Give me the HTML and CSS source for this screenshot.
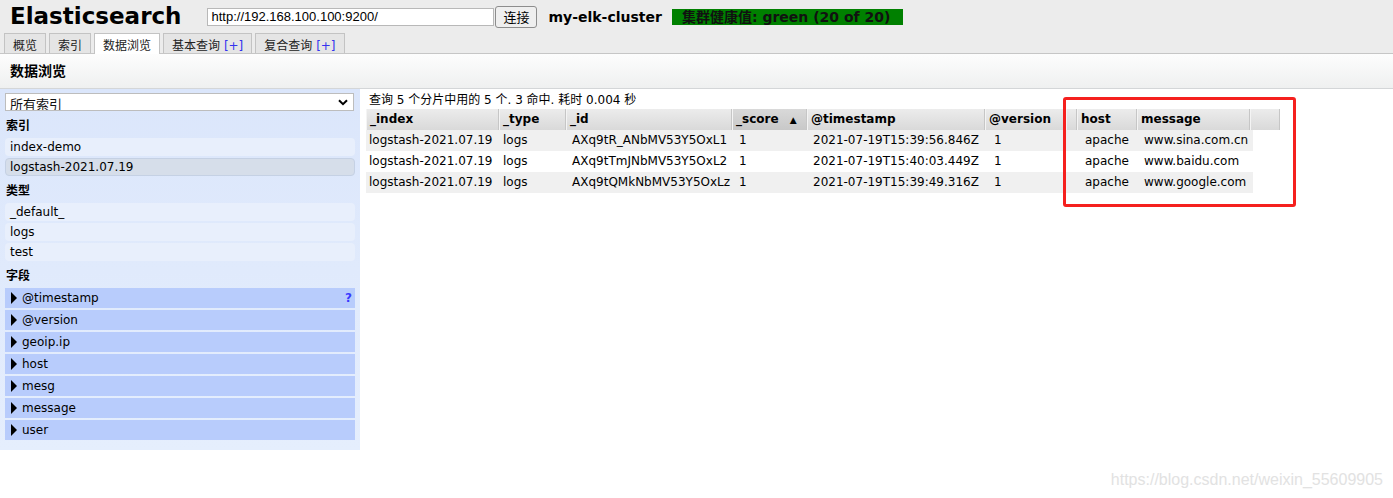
FILE: index.html
```html
<!DOCTYPE html>
<html lang="zh">
<head>
    <meta charset="UTF-8">
    <meta name="viewport" content="width=device-width, initial-scale=1.0">
    <link rel="stylesheet" href="styles.css">
    <title>Elasticsearch head - 数据浏览</title>
</head>
<body>
    <div class="header">
        <div class="top-bar">
            <h1 class="logo">Elasticsearch</h1>
            <input class="base-uri" type="text" value="http://192.168.100.100:9200/">
            <button class="connect">连接</button>
            <span class="cluster-name">my-elk-cluster</span>
            <span class="health">集群健康值: green (20 of 20)</span>
        </div>
        <div class="tabs">
            <div class="tab">概览</div>
            <div class="tab">索引</div>
            <div class="tab active">数据浏览</div>
            <div class="tab">基本查询 <span class="plus">[+]</span></div>
            <div class="tab">复合查询 <span class="plus">[+]</span></div>
        </div>
    </div>

    <div class="section-title">数据浏览</div>

    <div class="browser">
        <div class="sidebar">
            <select class="index-select">
                <option>所有索引</option>
            </select>
            <div class="group-label">索引</div>
            <div class="item">index-demo</div>
            <div class="item selected">logstash-2021.07.19</div>
            <div class="group-label">类型</div>
            <div class="item">_default_</div>
            <div class="item">logs</div>
            <div class="item">test</div>
            <div class="group-label">字段</div>
            <div class="field"><span class="arrow"></span>@timestamp<span class="help">?</span></div>
            <div class="field"><span class="arrow"></span>@version</div>
            <div class="field"><span class="arrow"></span>geoip.ip</div>
            <div class="field"><span class="arrow"></span>host</div>
            <div class="field"><span class="arrow"></span>mesg</div>
            <div class="field"><span class="arrow"></span>message</div>
            <div class="field"><span class="arrow"></span>user</div>
        </div>

        <div class="results">
            <div class="summary">查询 5 个分片中用的 5 个. 3 命中. 耗时 0.004 秒</div>
            <div class="thead">
                <div class="th">_index</div>
                <div class="th">_type</div>
                <div class="th">_id</div>
                <div class="th sorted">_score <span class="sort">▲</span></div>
                <div class="th">@timestamp</div>
                <div class="th">@version</div>
                <div class="th"></div>
                <div class="th">host</div>
                <div class="th">message</div>
                <div class="th"></div>
            </div>
            <div class="tr">
                <div class="td">logstash-2021.07.19</div>
                <div class="td">logs</div>
                <div class="td">AXq9tR_ANbMV53Y5OxL1</div>
                <div class="td">1</div>
                <div class="td">2021-07-19T15:39:56.846Z</div>
                <div class="td">1</div>
                <div class="td">apache</div>
                <div class="td">www.sina.com.cn</div>
            </div>
            <div class="tr">
                <div class="td">logstash-2021.07.19</div>
                <div class="td">logs</div>
                <div class="td">AXq9tTmJNbMV53Y5OxL2</div>
                <div class="td">1</div>
                <div class="td">2021-07-19T15:40:03.449Z</div>
                <div class="td">1</div>
                <div class="td">apache</div>
                <div class="td">www.baidu.com</div>
            </div>
            <div class="tr">
                <div class="td">logstash-2021.07.19</div>
                <div class="td">logs</div>
                <div class="td">AXq9tQMkNbMV53Y5OxLz</div>
                <div class="td">1</div>
                <div class="td">2021-07-19T15:39:49.316Z</div>
                <div class="td">1</div>
                <div class="td">apache</div>
                <div class="td">www.google.com</div>
            </div>
        </div>
    </div>

    <!-- annotation drawn over the screenshot -->
    <div class="mark"></div>
    <div class="watermark">https://blog.csdn.net/weixin_55609905</div>
</body>
</html>
```

FILE: styles.css
```css
body{
    margin:0;
    font-family:"DejaVu Sans","Noto Sans CJK SC",sans-serif;
    font-size:12px;
    color:#000;
    background:#fff;
}
.header{
    background:#ececec;
    border-bottom:1px solid #c6c6c6;
    height:53px;
}
.top-bar{
    display:flex;
    align-items:center;
    height:33px;
    padding-left:10px;
}
.logo{
    margin:0 26px 0 0;
    font-size:23px;
    font-weight:bold;
    line-height:33px;
}
.base-uri{
    box-sizing:border-box;
    width:287px;
    height:18px;
    margin:0;
    padding:0 3px;
    border:1px solid #b8b8b8;
    font-family:"Liberation Sans",sans-serif;
    font-size:13px;
}
.connect{
    box-sizing:border-box;
    width:42px;
    height:22px;
    margin:0 0 0 1px;
    padding:0;
    border:1px solid #8d8d8d;
    border-radius:3px;
    background:#efefef;
    font-family:"Noto Sans CJK SC",sans-serif;
    font-size:13px;
}
.cluster-name{
    margin-left:11px;
    font-size:14px;
    font-weight:bold;
}
.health{
    box-sizing:border-box;
    margin-left:10px;
    width:231px;
    height:16px;
    line-height:16px;
    padding-left:10px;
    background:#008000;
    color:#111;
    font-size:14px;
    font-weight:bold;
    white-space:nowrap;
}
.tabs{
    display:flex;
    align-items:flex-start;
    gap:3px;
    height:20px;
    padding-left:4px;
}
.tab{
    box-sizing:border-box;
    height:20px;
    line-height:16px;
    padding:4px 8px 0;
    border:1px solid #c3c3c3;
    border-bottom:none;
    background:#e5e5e5;
    color:#222;
    white-space:nowrap;
}
.tab.active{
    height:21px;
    margin-bottom:-1px;
    background:#fff;
}
.plus{
    color:#3333ee;
}
.section-title{
    height:34px;
    line-height:34px;
    padding-left:10px;
    font-size:14px;
    font-weight:bold;
    background:linear-gradient(#fdfdfd,#eff0f0);
    border-bottom:1px solid #d4d6d8;
}
.browser{
    display:flex;
    align-items:flex-start;
}
.sidebar{
    width:350px;
    padding:4px 5px 8px;
    background:linear-gradient(#dbe6fb,#e5eefd);
}
.index-select{
    display:block;
    box-sizing:border-box;
    width:349px;
    height:18px;
    margin:0 0 2px;
    padding:0 4px;
    border:1px solid #bdbdbd;
    background:#fff url("data:image/svg+xml,%3Csvg xmlns='http://www.w3.org/2000/svg' width='10' height='7' viewBox='0 0 10 7'%3E%3Cpath d='M1 1.2 5 5.2 9 1.2' fill='none' stroke='%23000' stroke-width='2'/%3E%3C/svg%3E") no-repeat right 5px center;
    -webkit-appearance:none;
    appearance:none;
    font-family:"Noto Sans CJK SC",sans-serif;
    font-size:13px;
    color:#111;
}
.group-label{
    padding:5px 1px 3px;
    line-height:17px;
    font-weight:bold;
}
.item{
    box-sizing:border-box;
    height:18px;
    line-height:18px;
    padding-left:5px;
    margin-bottom:2px;
    background:#e8effc;
    border-radius:4px;
}
.item.selected{
    line-height:16px;
    background:#d6deea;
    border:1px solid #c5d1e4;
    padding-left:4px;
}
.field{
    display:flex;
    align-items:center;
    height:20px;
    padding-left:6px;
    margin-bottom:2px;
    background:#b8ccfc;
}
.arrow{
    width:0;
    height:0;
    border-left:6px solid #000;
    border-top:6px solid transparent;
    border-bottom:6px solid transparent;
    margin-right:5px;
}
.help{
    margin-left:auto;
    padding-right:3px;
    color:#3a3aff;
    font-weight:bold;
}
.results{
    flex:1;
    padding-left:6px;
}
.summary{
    padding:3px 0 0 3px;
    line-height:17px;
}
.thead{
    display:grid;
    grid-template-columns:133px 67px 166px 75px 178px 81px 11px 60px 113px 30px;
    width:max-content;
    height:21px;
}
.th{
    box-sizing:border-box;
    height:21px;
    line-height:21px;
    padding-left:3px;
    border-left:1px solid #f4f4f4;
    border-right:1px solid #c6c6c6;
    background:linear-gradient(#ececec,#d9d9d9);
    font-weight:bold;
    white-space:nowrap;
    overflow:hidden;
}
.th.sorted{
    background:linear-gradient(#d9d9d9,#c8c8c8);
}
.sort{
    font-size:9px;
    margin-left:7px;
}
.tr{
    display:grid;
    grid-template-columns:134px 69px 167px 74px 181px 91px 59px 112px;
    width:max-content;
    height:21px;
    line-height:21px;
}
.tr:nth-of-type(odd){
    background:#f0f0f0;
}
.td{
    padding-left:3px;
    white-space:nowrap;
    overflow:hidden;
}
.mark{
    position:absolute;
    left:1063px;
    top:97px;
    width:233px;
    height:110px;
    box-sizing:border-box;
    border:3px solid #f5201e;
    border-radius:3px;
}
.watermark{
    position:absolute;
    right:10px;
    top:471px;
    color:#e2e2e2;
    font-family:"Liberation Sans",sans-serif;
    font-size:16px;
}
```
